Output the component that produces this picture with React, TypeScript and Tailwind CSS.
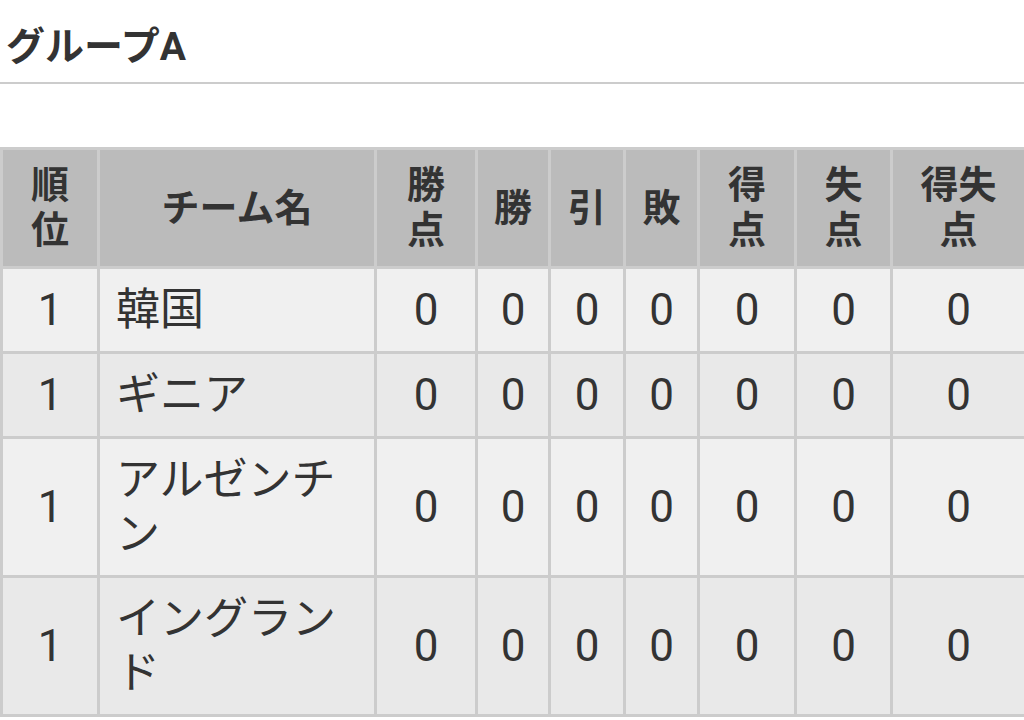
import React from "react";

const rows = [
  { rank: "1", name: "韓国" },
  { rank: "1", name: "ギニア" },
  { rank: "1", name: "アルゼンチン" },
  { rank: "1", name: "イングランド" },
];

export default function App() {
  const font = { fontFamily: "Roboto, 'Noto Sans CJK JP', sans-serif" };
  return (
    <div className="w-[1024px] h-[720px] overflow-hidden bg-white text-[#333333]" style={font}>
      <div className="h-[82px] flex items-center pt-[12px] pl-[6px] text-[39px] font-bold leading-[50px]">
        グループA
      </div>
      <div className="h-[2px] bg-[#cccccc]" />
      <div className="h-[63px]" />
      <div className="grid w-[1027px] bg-[#cccccc] p-[3px] gap-[3px] grid-cols-[94px_274px_98px_70px_72px_71px_94px_93px_131px]">
        {[
          ["順", "位"],
          ["チーム名"],
          ["勝", "点"],
          ["勝"],
          ["引"],
          ["敗"],
          ["得", "点"],
          ["失", "点"],
          ["得失", "点"],
        ].map((lines, i) => (
          <div
            key={i}
            className="bg-[#bbbbbb] h-[116px] flex flex-col items-center justify-center text-center text-[38px] leading-[45px] font-bold"
          >
            {lines.map((l, j) => (
              <span key={j}>{l}</span>
            ))}
          </div>
        ))}
        {rows.map((r, ri) => {
          const bg = ri % 2 === 0 ? "bg-[#f0f0f0]" : "bg-[#e9e9e9]";
          const cls = `${bg} flex items-center justify-center text-[44px] leading-[54px] py-[14px]`;
          return (
            <React.Fragment key={ri}>
              <div className={cls}>{r.rank}</div>
              <div className={`${bg} flex items-center text-[44px] leading-[54px] py-[14px] px-[16px]`}>
                <span>{r.name}</span>
              </div>
              {Array.from({ length: 7 }).map((_, k) => (
                <div key={k} className={cls}>
                  0
                </div>
              ))}
            </React.Fragment>
          );
        })}
      </div>
    </div>
  );
}
